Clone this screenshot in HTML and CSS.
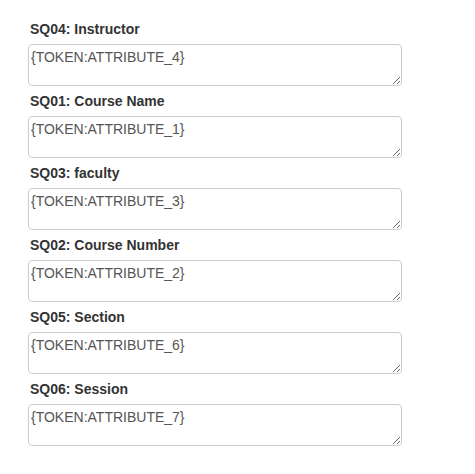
FILE: index.html
```html
<!DOCTYPE html>
<html lang="en">
<head>
    <meta charset="UTF-8">
    <meta name="viewport" content="width=device-width, initial-scale=1.0">
    <title>Survey Attributes</title>
    <link rel="stylesheet" href="styles.css">
</head>
<body>
    <form class="attr-form">
        <div class="field">
            <label for="sq04">SQ04: Instructor</label>
            <textarea id="sq04">{TOKEN:ATTRIBUTE_4}</textarea>
        </div>
        <div class="field">
            <label for="sq01">SQ01: Course Name</label>
            <textarea id="sq01">{TOKEN:ATTRIBUTE_1}</textarea>
        </div>
        <div class="field">
            <label for="sq03">SQ03: faculty</label>
            <textarea id="sq03">{TOKEN:ATTRIBUTE_3}</textarea>
        </div>
        <div class="field">
            <label for="sq02">SQ02: Course Number</label>
            <textarea id="sq02">{TOKEN:ATTRIBUTE_2}</textarea>
        </div>
        <div class="field">
            <label for="sq05">SQ05: Section</label>
            <textarea id="sq05">{TOKEN:ATTRIBUTE_6}</textarea>
        </div>
        <div class="field">
            <label for="sq06">SQ06: Session</label>
            <textarea id="sq06">{TOKEN:ATTRIBUTE_7}</textarea>
        </div>
    </form>
</body>
</html>
```

FILE: styles.css
```css
body {
    margin: 0;
    background-color: #fff;
    font-family: "Liberation Sans", Arial, sans-serif;
    color: #333;
}

.attr-form {
    display: flex;
    flex-direction: column;
    gap: 5px;
    padding: 19px 0 0 28px;
}

.field {
    display: flex;
    flex-direction: column;
}

label {
    font-size: 14px;
    font-weight: bold;
    line-height: 20px;
    margin: 0 0 5px 2px;
}

textarea {
    width: 374px;
    height: 42px;
    box-sizing: border-box;
    padding: 4px 2px 2px;
    border: 1px solid #ccc;
    border-radius: 4px;
    font-family: "Liberation Sans", Arial, sans-serif;
    font-size: 14px;
    color: #555;
    resize: vertical;
}
```
